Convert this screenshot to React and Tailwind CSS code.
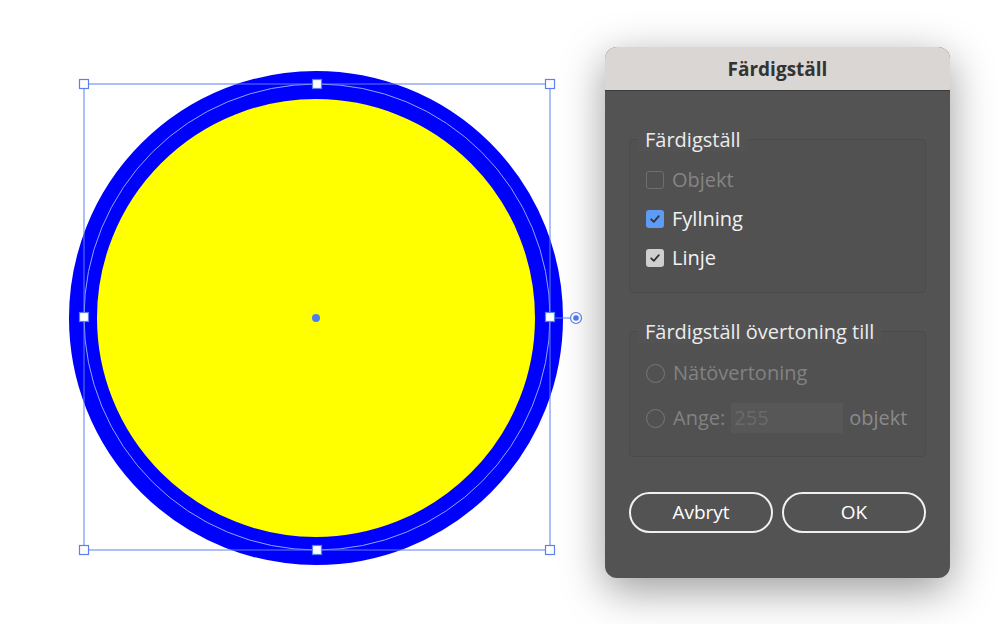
import React from 'react'

const font = { fontFamily: '"Open Sans", "Noto Sans", sans-serif' }

function Canvas() {
    const handles = [
        [84, 84], [317, 84], [550, 84],
        [84, 317], [550, 317],
        [84, 550], [317, 550], [550, 550],
    ]
    return (
        <svg width="605" height="624" viewBox="0 0 605 624" className="shrink-0">
            <circle cx="316" cy="318" r="233" fill="#ffff00" stroke="#0000ff" strokeWidth="28" />
            <circle cx="317" cy="317" r="233" fill="none" stroke="#8fa4ff" strokeWidth="1" />
            <rect x="84" y="84" width="466" height="466" fill="none" stroke="#5b80ef" strokeWidth="1" />
            <line x1="554" y1="318" x2="570" y2="318" stroke="#5b80ef" strokeWidth="1" />
            <circle cx="576" cy="318" r="5.5" fill="white" stroke="#5b80ef" strokeWidth="1.2" />
            <circle cx="576" cy="318" r="2.8" fill="#4f7cf0" />
            {handles.map(([x, y]) => (
                <rect key={x + '-' + y} x={x - 4.5} y={y - 4.5} width="9" height="9" fill="white" stroke="#5b80ef" strokeWidth="1.2" />
            ))}
            <circle cx="316" cy="318" r="4" fill="#4f7cf0" />
        </svg>
    )
}

function Check({ checked, tone }) {
    const bg = !checked ? 'bg-transparent border border-[#6e6e6e]' : tone === 'blue' ? 'bg-[#5e9bf5]' : 'bg-[#cfcfcf]'
    return (
        <span className={`w-[18px] h-[18px] rounded-[3px] flex items-center justify-center shrink-0 ${bg}`}>
            {checked && (
                <svg width="12" height="12" viewBox="0 0 12 12">
                    <path d="M2.2 6.3 L4.8 8.8 L9.8 3.2" fill="none" stroke="#333" strokeWidth="1.8" strokeLinecap="round" strokeLinejoin="round" />
                </svg>
            )}
        </span>
    )
}

function Radio() {
    return <span className="w-[19px] h-[19px] rounded-full border border-[#777] shrink-0" />
}

function Group({ legend, className = '', children }) {
    return (
        <div className={`relative border border-[#4b4b4b] bg-[#515151] rounded-[4px] ${className}`}>
            <span className="absolute -top-[11px] left-[8px] px-[7px] bg-[#535353] text-[20px] font-medium leading-[22px] text-[#ececec]">{legend}</span>
            {children}
        </div>
    )
}

export default function App() {
    return (
        <div className="w-[1000px] h-[624px] bg-white flex overflow-hidden" style={font}>
            <Canvas />
            <div className="w-[345px] h-[531px] mt-[47px] rounded-[12px] bg-[#535353] overflow-hidden shadow-[0_12px_44px_rgba(0,0,0,0.4)] flex flex-col">
                <div className="h-[44px] bg-[#d9d6d4] border-b border-[#3c3c3c] flex items-center justify-center pt-[2px]">
                    <span className="text-[19px] font-bold text-[#333]">Färdigställ</span>
                </div>
                <div className="px-[24px] pt-[48px]">
                    <Group legend="Färdigställ" className="h-[154px] pt-[29px] pl-[16px]">
                        <div className="flex flex-col gap-[17px]">
                            <div className="flex items-center gap-[8px] h-[22px]">
                                <Check />
                                <span className="text-[20px] font-medium text-[#858585]">Objekt</span>
                            </div>
                            <div className="flex items-center gap-[8px] h-[22px]">
                                <Check checked tone="blue" />
                                <span className="text-[20px] font-medium text-[#f2f2f2]">Fyllning</span>
                            </div>
                            <div className="flex items-center gap-[8px] h-[22px]">
                                <Check checked />
                                <span className="text-[20px] font-medium text-[#f2f2f2]">Linje</span>
                            </div>
                        </div>
                    </Group>
                    <Group legend="Färdigställ övertoning till" className="h-[126px] mt-[38px] pt-[29px] pl-[16px]">
                        <div className="flex items-center gap-[8px] h-[24px]">
                            <Radio />
                            <span className="text-[20px] font-medium text-[#828282]">Nätövertoning</span>
                        </div>
                        <div className="flex items-center gap-[8px] h-[30px] mt-[18px]">
                            <Radio />
                            <span className="text-[20px] font-medium text-[#828282]">Ange:</span>
                            <span className="w-[112px] h-[30px] bg-[#575757] flex items-center pl-[3px] text-[20px] font-medium text-[#6a6a6a] -ml-[2px]">255</span>
                            <span className="text-[20px] font-medium text-[#8a8a8a] -ml-[2px]">objekt</span>
                        </div>
                    </Group>
                    <div className="flex gap-[9px] mt-[35px]">
                        <button className="w-[145px] h-[41px] rounded-full border-2 border-[#f0f0f0] text-[19px] font-medium text-white">Avbryt</button>
                        <button className="w-[145px] h-[41px] rounded-full border-2 border-[#f0f0f0] text-[19px] font-medium text-white">OK</button>
                    </div>
                </div>
            </div>
        </div>
    )
}
